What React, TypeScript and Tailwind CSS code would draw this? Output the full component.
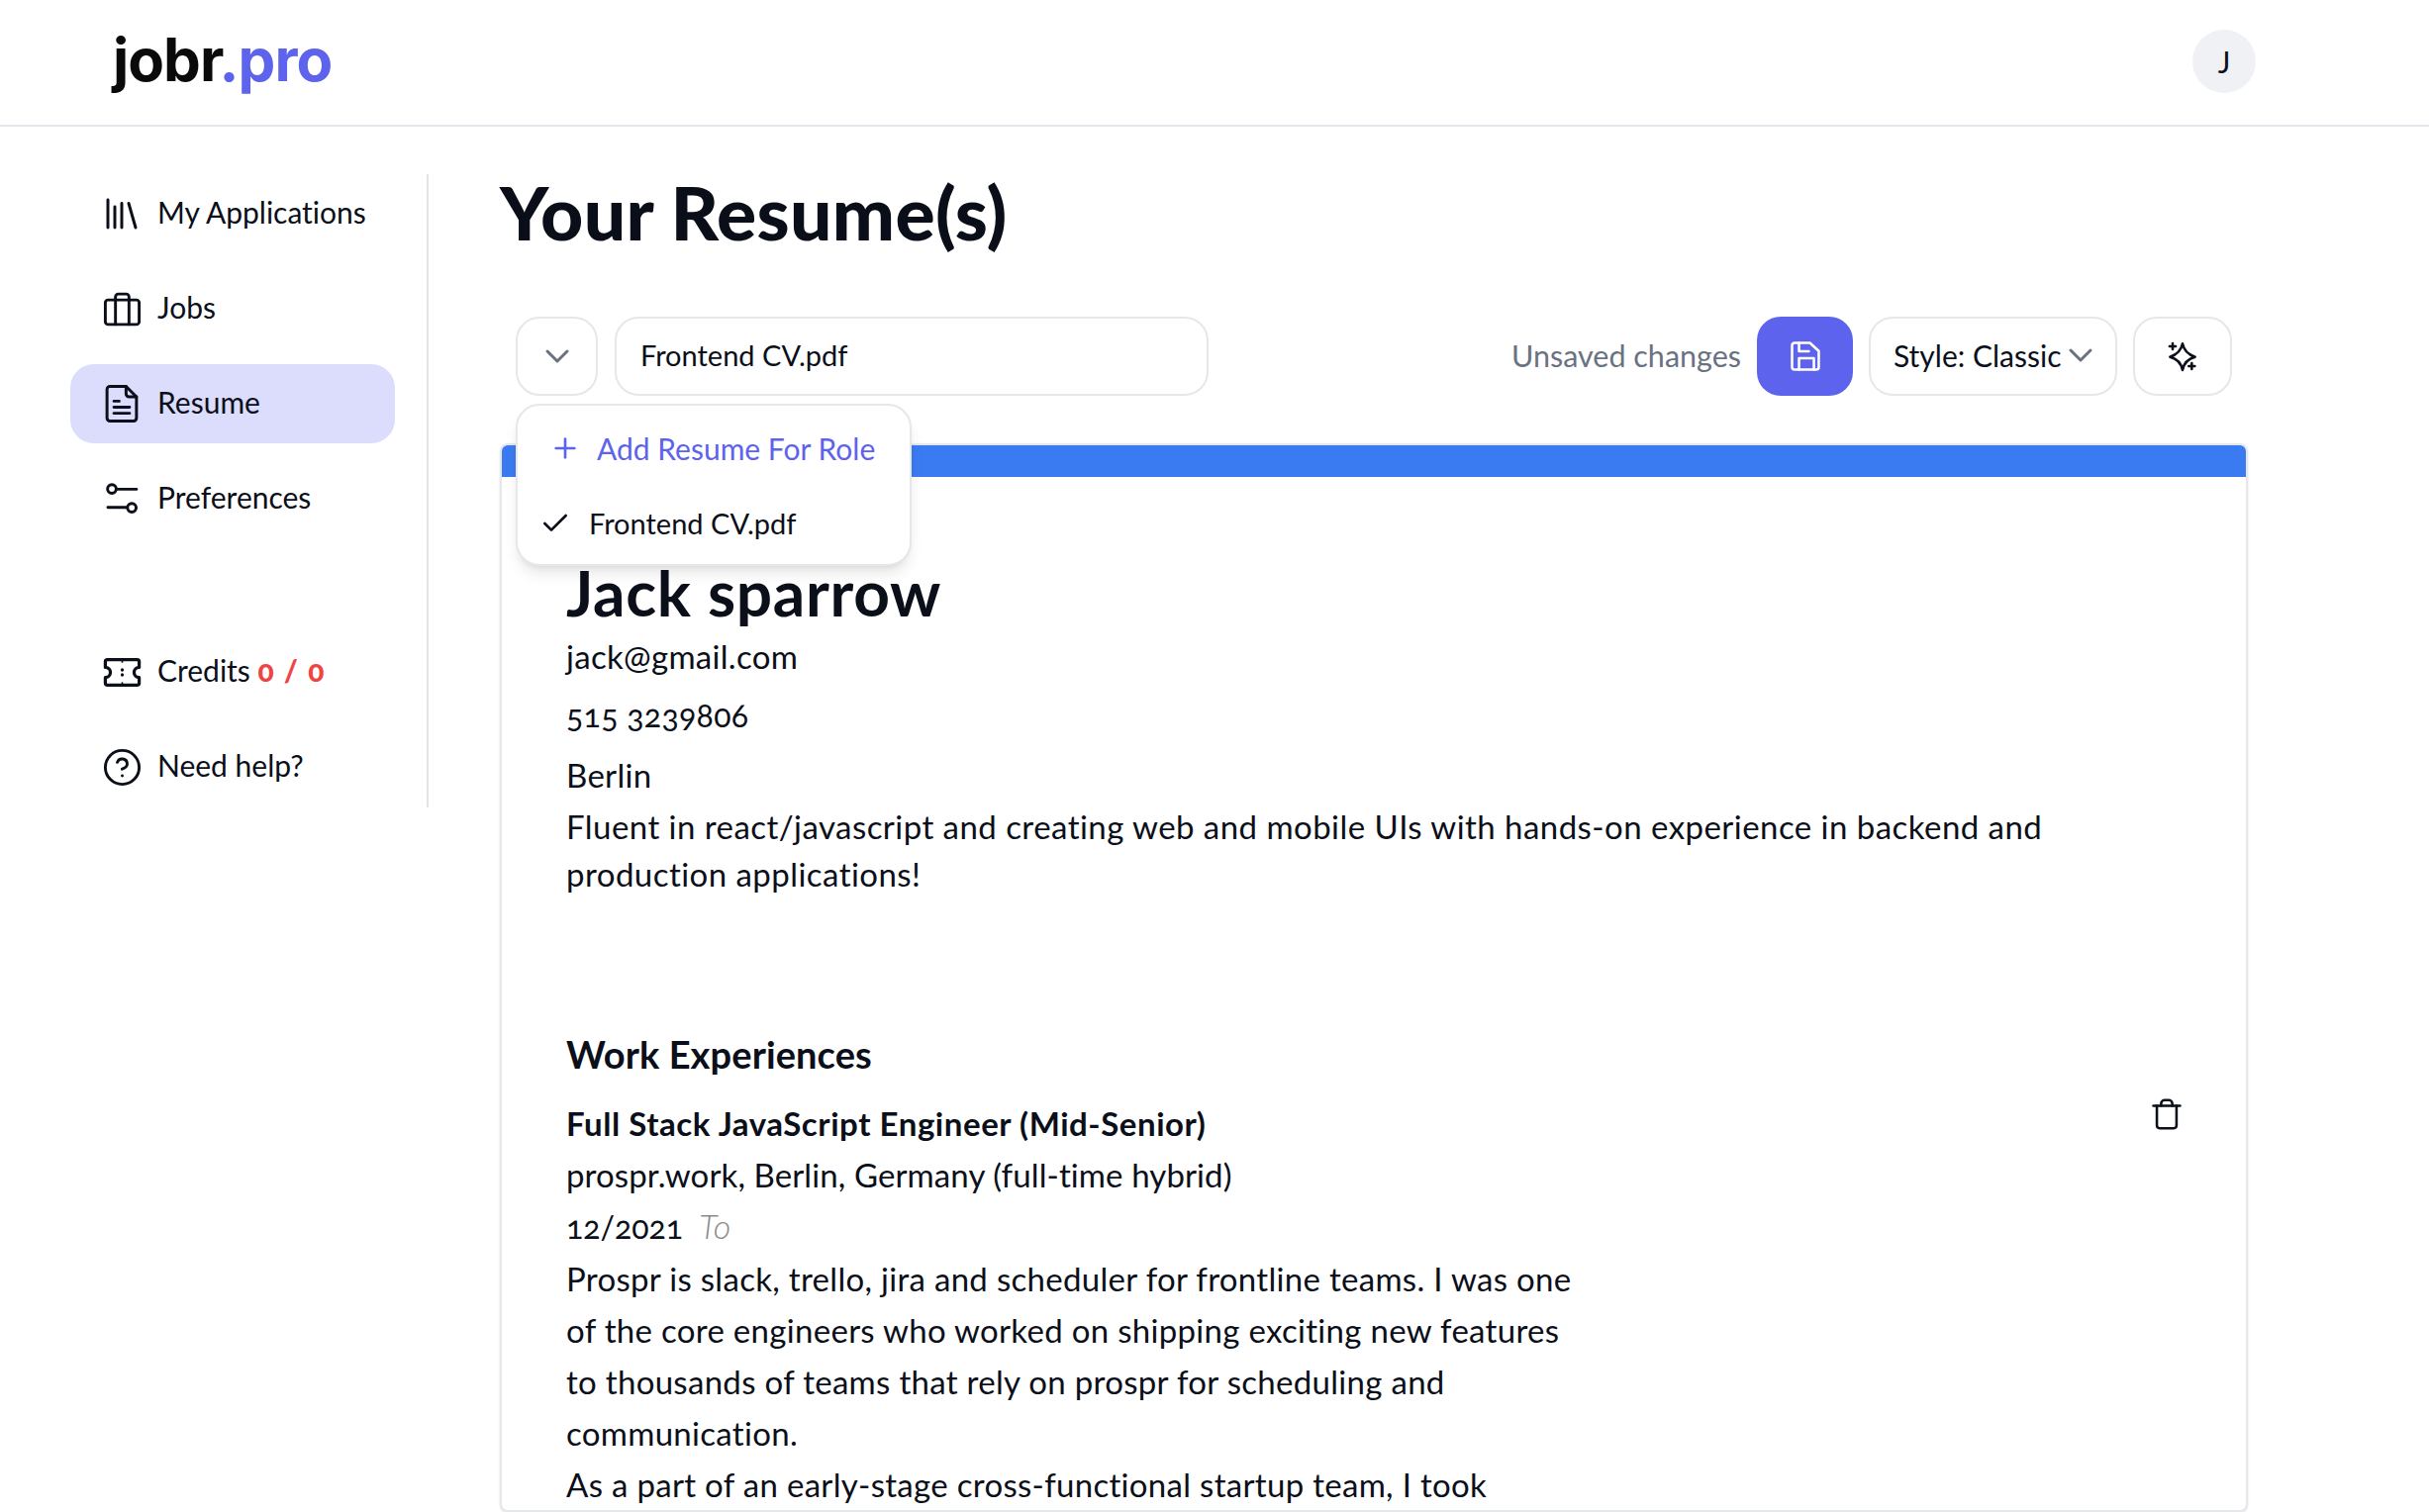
import { ChevronDown, Check, Plus, Library, CircleHelp } from 'lucide-react';
import type { ReactNode } from 'react';

const font = "font-['Lato','Noto_Sans',sans-serif]";

function IconBriefcase() {
  return (
    <svg className="w-[41px] h-[41px]" viewBox="0 0 24 24" fill="none" stroke="currentColor" strokeWidth={1.7} strokeLinejoin="round" strokeLinecap="round">
      <rect x="2" y="6.500" width="20" height="14.500" rx="1.600" />
      <path d="M8 21V4.700A1.700 1.700 0 0 1 9.700 3h4.600A1.700 1.700 0 0 1 16 4.700V21" />
    </svg>
  );
}

function IconFile() {
  return (
    <svg className="w-[42px] h-[42px]" viewBox="0 0 24 24" fill="none" stroke="currentColor" strokeWidth={1.7} strokeLinejoin="round" strokeLinecap="round">
      <path d="M14.500 2H5.200A1.700 1.700 0 0 0 3.500 3.700v16.600A1.700 1.700 0 0 0 5.200 22h13.600a1.700 1.700 0 0 0 1.700-1.700V8z" />
      <path d="M14.500 2v4.300A1.700 1.700 0 0 0 16.200 8h4.300" />
      <path d="M7.500 10.500h3M7.500 14h9M7.500 17.500h9" />
    </svg>
  );
}

function IconSliders() {
  return (
    <svg className="w-[42px] h-[42px]" viewBox="0 0 24 24" fill="none" stroke="currentColor" strokeWidth={1.7} strokeLinecap="round">
      <circle cx="6.300" cy="6.300" r="2.500" />
      <circle cx="17.800" cy="17.200" r="2.500" />
      <path d="M9 6.500h11.500M4 17h11" />
    </svg>
  );
}

function IconTicket() {
  return (
    <svg className="w-[41px] h-[41px]" viewBox="0 0 24 24" fill="none" stroke="currentColor" strokeWidth={1.9} strokeLinejoin="round" strokeLinecap="round">
      <path d="M3.200 4.400h17.600a1.200 1.200 0 0 1 1.200 1.200V9a3 3 0 0 0 0 6v3.400a1.200 1.200 0 0 1-1.200 1.200H3.200A1.200 1.200 0 0 1 2 18.400V15a3 3 0 0 0 0-6V5.600a1.200 1.200 0 0 1 1.200-1.200z" />
      <path d="M12 10.500v.1M12 13.400v.1" />
      <path d="M12 4.400v1.400M12 18.200v1.400" strokeWidth={1} />
    </svg>
  );
}

function IconSave() {
  return (
    <svg className="w-9 h-9" viewBox="0 0 24 24" fill="none" stroke="currentColor" strokeWidth={1.700} strokeLinejoin="round" strokeLinecap="round">
      <path d="M3 4.700A1.700 1.700 0 0 1 4.700 3h10.300L21 8.500v10.800a1.700 1.700 0 0 1-1.700 1.700H4.700A1.700 1.700 0 0 1 3 19.300z" />
      <path d="M7.700 21v-7.700h10V21M7.700 3v5.700h6.600" />
    </svg>
  );
}

function IconSparkle() {
  return (
    <svg className="w-8 h-8" viewBox="0 0 24 24" fill="none" stroke="currentColor" strokeWidth={1.900} strokeLinejoin="round" strokeLinecap="round">
      <path d="M12 2.500Q13.500 10 21.500 12.500Q13.500 14.500 12 22.500Q10.500 14.500 2.500 12.500Q10.500 10 12 2.500z" />
      <path d="M4.500 2.200v4.600M2.200 4.500h4.600M19 17.200v4.600M16.700 19.500h4.600" />
    </svg>
  );
}

function IconTrash() {
  return (
    <svg className="w-[34px] h-[34px]" viewBox="0 0 24 24" fill="none" stroke="currentColor" strokeWidth={1.800} strokeLinejoin="round" strokeLinecap="round">
      <path d="M2.500 6h19" />
      <path d="M5 6v14a2 2 0 0 0 2 2h10a2 2 0 0 0 2-2V6" />
      <path d="M8 6V4.500A2.500 2.500 0 0 1 10.500 2h3A2.500 2.500 0 0 1 16 4.500V6" />
    </svg>
  );
}

function NavItem({ icon, active, children, className = '' }: { icon: ReactNode; active?: boolean; children: ReactNode; className?: string }) {
  return (
    <a className={`flex items-center h-20 rounded-3xl pl-[30px] gap-[14px] text-[30px] text-[#0b0f19] ${active ? 'bg-[#dcdcfc]' : ''} ${className}`}>
      <span className="w-[44px] flex justify-center shrink-0">{icon}</span>
      <span className="pb-[3px]">{children}</span>
    </a>
  );
}

const lines = [
  'Prospr is slack, trello, jira and scheduler for frontline teams. I was one',
  'of the core engineers who worked on shipping exciting new features',
  'to thousands of teams that rely on prospr for scheduling and',
  'communication.',
  'As a part of an early-stage cross-functional startup team, I took',
];

export default function App() {
  return (
    <div className={`h-screen overflow-hidden bg-white text-[#0b0f19] [font-variant-ligatures:none] ${font}`}>
      {/* Header */}
      <header className="h-[128px] border-b-2 border-[#e2e6ea] flex items-center justify-between pl-[114px] pr-[175px] pb-0.5">
        <div className="font-['Inter',sans-serif] font-bold text-[60px] tracking-[-1px] leading-none pb-1">
          <span className="text-[#0a0a0a]">jobr</span>
          <span className="text-[#5d63ec]">.pro</span>
        </div>
        <div className="w-16 h-16 rounded-full bg-[#f0f1f5] flex items-center justify-center text-[30px]">J</div>
      </header>

      <div className="flex pl-[71px] pt-12">
        {/* Sidebar */}
        <aside className="w-[362px] h-[640px] pr-8 border-r-2 border-[#e2e4ea] shrink-0">
          <nav className="flex flex-col gap-4">
            <NavItem icon={<Library className="w-[42px] h-[42px]" strokeWidth={1.7} />}>My Applications</NavItem>
            <NavItem icon={<IconBriefcase />}>Jobs</NavItem>
            <NavItem active icon={<IconFile />}>Resume</NavItem>
            <NavItem icon={<IconSliders />}>Preferences</NavItem>
            <NavItem className="mt-[79px]" icon={<IconTicket />}>
              Credits <span className="text-[#ef4444] font-black text-[30px] tracking-[1.5px] oldstyle-nums">0 / 0</span>
            </NavItem>
            <NavItem icon={<CircleHelp className="w-[41px] h-[41px]" strokeWidth={1.7} />}>Need help?</NavItem>
          </nav>
        </aside>

        {/* Main */}
        <main className="ml-[72px] w-[1766px] shrink-0">
          <h1 className="text-[75px] leading-[76px] pb-1 font-black tracking-[0.3px] text-[#0a0e18]">Your Resume(s)</h1>

          {/* Toolbar */}
          <div className="relative mt-16 px-4 flex items-center text-[30px]">
            <button className="w-[83px] h-20 rounded-3xl border-2 border-gray-200 flex items-center justify-center text-gray-500">
              <ChevronDown className="w-10 h-10" strokeWidth={1.8} />
            </button>
            <div className="ml-[17px] w-[600px] h-20 rounded-3xl border-2 border-gray-200 flex items-center pl-6 pb-0.5 text-[29px]">Frontend CV.pdf</div>

            <span className="ml-auto text-gray-500 text-[30.5px]">Unsaved changes</span>
            <button className="ml-4 w-[97px] h-20 rounded-3xl bg-[#5d63ec] flex items-center justify-center text-white">
              <IconSave />
            </button>
            <button className="ml-4 w-[251px] h-20 rounded-3xl border-2 border-gray-200 flex items-center pl-[23px] pb-0.5">
              <span>Style: Classic</span>
              <ChevronDown className="w-10 h-10 text-gray-500" strokeWidth={1.8} />
            </button>
            <button className="ml-4 w-[100px] h-20 rounded-3xl border-2 border-gray-200 flex items-center justify-center">
              <IconSparkle />
            </button>

            {/* Dropdown */}
            <div className="absolute z-10 left-4 top-[88px] w-[400px] h-[164px] rounded-3xl border-2 border-gray-200 bg-white shadow-lg flex flex-col">
              <div className="flex items-center h-[88px] pl-[32px] gap-4 pb-0.5 text-[#5d63ec] text-[30px]">
                <Plus className="w-8 h-8" strokeWidth={2} />
                <span>Add Resume For Role</span>
              </div>
              <div className="flex items-center h-16 pl-[22px] gap-[18px] pb-0.5 text-[29px]">
                <Check className="w-8 h-8" strokeWidth={2} />
                <span>Frontend CV.pdf</span>
              </div>
            </div>
          </div>

          {/* Resume card */}
          <section className="mt-[48px] rounded-lg border-2 border-gray-200 shadow-sm">
            <div className="h-8 bg-[#3b7bf2] rounded-t-md" />
            <div className="pt-[83px] pl-[65px] pr-[63px] text-[33px] tracking-[0.3px]">
              <h2 className="text-[64px] leading-[68px] font-bold tracking-[0.7px]">Jack sparrow</h2>
              <div className="mt-1.5 flex flex-col gap-3 leading-[48px]">
                <p>jack@gmail.com</p>
                <p className="oldstyle-nums text-[32px] tracking-[0.3px]">515 3239806</p>
                <p>Berlin</p>
              </div>
              <p className="mt-1 leading-[48px] max-w-[1520px] tracking-[0.45px]">
                Fluent in react/javascript and creating web and mobile UIs with hands-on experience in backend and production applications!
              </p>

              <h3 className="mt-[130px] text-[38px] leading-[56px] font-bold tracking-[0.1px]">Work Experiences</h3>
              <div className="mt-4 flex justify-between items-start">
                <div className="leading-[52px]">
                  <p className="font-bold tracking-[0.55px]">Full Stack JavaScript Engineer (Mid-Senior)</p>
                  <p className="tracking-[0.1px]">prospr.work, Berlin, Germany (full-time hybrid)</p>
                  <p className="oldstyle-nums text-[32px] tracking-normal">
                    12/2021 <em className="ml-2 text-[#8a8a8a] text-[34px] font-light">To</em>
                  </p>
                  {lines.map((l) => (
                    <p key={l}>{l}</p>
                  ))}
                </div>
                <IconTrash />
              </div>
            </div>
          </section>
        </main>
      </div>
    </div>
  );
}
